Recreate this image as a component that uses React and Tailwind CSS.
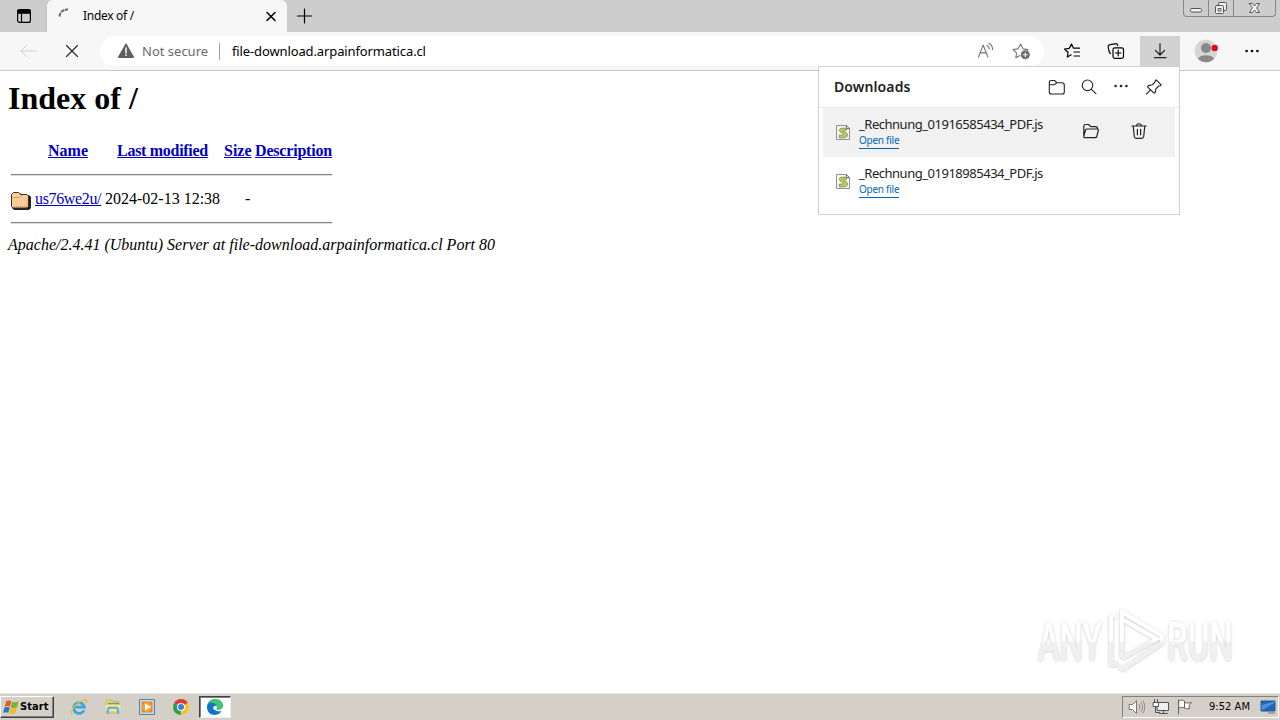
import React from 'react';

const downloads = [
  { name: '_Rechnung_01916585434_PDF.js', active: true },
  { name: '_Rechnung_01918985434_PDF.js', active: false },
];

const Icon = ({ size = 16, className = '', children, w = 1 }) => (
  <svg
    width={size}
    height={size}
    viewBox={`0 0 ${size} ${size}`}
    fill="none"
    stroke="currentColor"
    strokeWidth={w}
    strokeLinecap="round"
    strokeLinejoin="round"
    className={`block shrink-0 ${className}`}
  >
    {children}
  </svg>
);

const Dots = ({ className = '' }) => (
  <Icon className={className}>
    <g fill="currentColor" stroke="none">
      <circle cx="2.6" cy="8" r="1.3" />
      <circle cx="8" cy="8" r="1.3" />
      <circle cx="13.4" cy="8" r="1.3" />
    </g>
  </Icon>
);

const TabBar = () => (
  <div className="flex h-8 bg-[#cdcdcd] text-black">
    <div className="w-[46px] pt-2 pl-4">
      <Icon w={1.2}>
        <rect x="1.6" y="1.6" width="12.8" height="12.8" rx="2" />
        <path d="M2 2h12v3.2H2z" fill="currentColor" />
        <path d="M5.5 5v9" />
      </Icon>
    </div>
    <div className="w-[241px] flex items-center bg-[#f7f7f7] rounded-t-md pl-[11px] pr-2 border-l border-[#c4c4c4]">
      <Icon className="text-[#666]" w={2}>
        <path d="M1.4 8.5C2 4 5 1.4 10 1.4" strokeDasharray="4 .7" strokeLinecap="butt" />
      </Icon>
      <span className="ml-[9px] flex-1 text-[12px] tracking-[-0.3px] whitespace-nowrap">Index of /</span>
      <Icon w={1.5}>
        <path d="M4 4.5l8 8M12 4.5l-8 8" />
      </Icon>
    </div>
    <Icon size={18} className="ml-2 mt-[7px]" w={1.2}>
      <path d="M2.5 9h14M9.5 2v14" />
    </Icon>
    <div className="ml-auto mr-1 flex h-[17px] border border-t-0 border-[#888] rounded-b-sm text-[#555]">
      <div className="w-[25px] pl-[5px] border-r border-[#888]">
        <Icon>
          <rect x="1.5" y="8.5" width="11" height="3.5" rx="1.2" fill="#f3f3f3" />
        </Icon>
      </div>
      <div className="w-[25px] pl-[5px] border-r border-[#888]">
        <Icon>
          <rect x="4.5" y="2.5" width="8" height="8" rx="1" fill="#eee" />
          <rect x="1.5" y="5.5" width="8" height="8" rx="1" fill="#eee" />
          <rect x="4.5" y="8.5" width="2.5" height="2.5" />
        </Icon>
      </div>
      <div className="w-[41px] pl-3">
        <Icon>
          <path d="M3.5 3.5h3L8.5 6l2-2.5h3L10.7 8l2.8 4.5h-3L8.5 10l-2 2.5h-3L6.3 8z" fill="#f3f3f3" />
        </Icon>
      </div>
    </div>
  </div>
);

const Toolbar = () => (
  <div className="flex items-center h-[39px] bg-[#f7f7f7] border-b border-[#c6c6c6]">
    <Icon size={18} className="ml-[19px] text-[#cfcfcf]">
      <path d="M17 9H2M8 3L2 9l6 6" />
    </Icon>
    <Icon className="ml-[27px] text-[#222]" w={1.1}>
      <path d="M2.5 2.5l11 11M13.5 2.5l-11 11" />
    </Icon>
    <div className="ml-[20px] w-[944px] h-[30px] rounded-full bg-white flex items-center pl-[17px] text-[13px] whitespace-nowrap">
      <Icon size={18} className="text-[#5f5f5f]">
        <path d="M9 2.3L16.2 15.2H1.8z" fill="currentColor" strokeWidth="1.6" />
        <path d="M9 6v5M9 13v.6" stroke="#fff" strokeWidth="1.5" />
      </Icon>
      <span className="ml-[7px] pt-px w-[66px] text-[#6a6a6a]">Not secure</span>
      <span className="ml-[11px] w-px h-[17px] bg-[#a0a0a0]" />
      <span className="ml-[12px] pt-px text-black flex-1 tracking-[-0.12px]">file-download.arpainformatica.cl</span>
      <Icon size={18} className="text-[#777] mr-[18px]" w={1.1}>
        <path d="M2.5 15L7.2 3l4.7 12M4.2 10.9h6M11 3.2c1.5.8 2.2 2 2.3 3.7M13 1.2c2.4 1.4 3.6 3.6 3.6 6.4" />
      </Icon>
      <Icon size={18} className="text-[#777] mr-[14px]" w={1.1}>
        <path d="M8 13.6l-4.2 2.2.8-4.8L1 7.6l4.9-.7L8.7 2l2.4 4.9 4.9.7-1 1" />
        <circle cx="13.3" cy="12.8" r="4" fill="#666" />
        <path d="M13.3 10.8v4M11.3 12.8h4" stroke="#fff" />
      </Icon>
    </div>
    <Icon size={18} className="ml-[19px] text-black" w={1.2}>
      <path d="M8.2 12.8L4.3 15l.8-4.7L1.5 7l4.7-.6L8.5 2l2 4.2h6M11 10h5.5M11 14h5.5" />
    </Icon>
    <Icon size={18} className="ml-[26px] text-black" w={1.2}>
      <path d="M3.5 11.5C2.5 11 2.3 10 2 9L1.2 5.2c-.2-1.4.4-2.2 1.8-2.5L8 1.8c1.5-.3 2.3.2 2.7 1.7" />
      <rect x="6" y="5.8" width="10.5" height="10.5" rx="1.8" fill="#f7f7f7" />
      <path d="M11.2 8.2v5.6M8.4 11H14" />
    </Icon>
    <div className="ml-[15px] w-10 h-[31px] bg-[#d2d2d2] flex items-center justify-center text-[#222]">
      <Icon size={18} w={1.2}>
        <path d="M9 1.5v11.3M4.5 8.5L9 13l4.5-4.5M3.5 15.6h11.5" />
      </Icon>
    </div>
    <svg width="24" height="24" viewBox="0 0 24 24" className="ml-[14px]">
      <circle cx="12" cy="12" r="11.3" fill="#d5d5d1" />
      <circle cx="12" cy="9" r="5" fill="#8b8888" />
      <path d="M4 19.5c2-4.5 14-4.5 16 0-3.5 5-12.5 5-16 0z" fill="#8b8888" />
      <circle cx="20.7" cy="9" r="3.2" fill="#d90d1c" />
    </svg>
    <Dots className="ml-[26px] text-black" />
  </div>
);

const DirectoryIndex = () => (
  <main className="h-[622px] pl-2 font-['Liberation_Serif',serif] text-[16px] leading-[18px] text-black">
    <h1 className="pt-[9px] text-[32px] leading-9 font-bold">Index of /</h1>
    <div className="ml-[3px] w-[321px]">
      <div className="mt-[26px] grid grid-cols-[20px_66px_115px_27px_77px] gap-x-1 text-center font-bold text-[#0000c8] underline whitespace-nowrap">
        <span />
        <span>Name</span>
        <span className="tracking-[-0.3px]">Last modified</span>
        <span>Size</span>
        <span className="tracking-[-0.2px]">Description</span>
      </div>
      <hr className="mt-[14px] h-[2px] border-t border-b border-t-[#808080] border-b-[#ddd]" />
      <div className="mt-[14px] h-[22px] grid grid-cols-[20px_66px_115px_27px_77px] gap-x-1 whitespace-nowrap">
        <svg width="20" height="22" viewBox="0 0 20 22">
          <path d="M2 5l2-2h5l2 2h7l2 2v11l-2 2H3l-2-2z" fill="#222" />
          <path d="M.5 4.5l2-2h5l2 2h6.5l1.5 1.5v10.5L16 18H2L.5 16.5z" fill="#ffcc99" stroke="#333" />
          <path d="M1.5 7.5h7l2-2" fill="none" stroke="#c98f5c" strokeWidth=".8" />
          <path d="M3 16.5h13V8" fill="none" stroke="#d88b58" strokeDasharray="1 1" />
        </svg>
        <span className="text-[#0000c8] underline tracking-[-0.35px]">us76we2u/</span>
        <span>2024-02-13 12:38</span>
        <span className="pl-[21px]">-</span>
      </div>
      <hr className="mt-[10px] h-[2px] border-t border-b border-t-[#808080] border-b-[#ddd]" />
    </div>
    <address className="mt-3 italic">
      Apache/2.4.41 (Ubuntu) Server at file-download.arpainformatica.cl Port 80
    </address>
  </main>
);

const ScriptIcon = () => (
  <svg width="16" height="17" viewBox="0 0 16 17" className="shrink-0">
    <path d="M1.5 1.5h10l3 3v11h-13z" fill="#f8f8f5" stroke="#8f8f9b" />
    <path d="M11.5 1.5v3h3" fill="none" stroke="#66667a" />
    <path d="M11.5 4.2H6.8C4 4.2 3.5 7 5.7 8.2l1.8 1c1 .8.6 2-1 2H4.2v2.6h5.3c3.2 0 4-3.6 1.7-5L8.8 7.3c-.8-.6-.5-1 .7-1h2z" fill="#bdc763" stroke="#7f883f" strokeWidth=".8" />
  </svg>
);

const DownloadsPanel = () => (
  <div className="absolute left-[818px] top-[66px] w-[362px] h-[149px] bg-white border border-[#d0d0d0] text-[#222]">
    <div className="flex items-center h-[41px] pl-[15px] border-b border-[#ececec]">
      <span className="flex-1 pb-[2px] text-[14px] font-semibold tracking-[0.1px]">Downloads</span>
      <Icon size={18} className="mr-[14px]" w={1.1}>
        <path d="M1.3 4.5c0-1.3.7-2 2-2h3.2L8.8 4.7h5c1.7 0 2.5.8 2.5 2.3v7c0 1.2-.8 2-2 2h-11c-1.3 0-2-.8-2-2zM1.3 6.8h5l2.5-2.1" />
      </Icon>
      <Icon size={18} className="mr-[15px]" w={1.1}>
        <circle cx="7.5" cy="7.3" r="5.3" />
        <path d="M11.5 11.3l4.4 4.4" />
      </Icon>
      <Dots className="mr-4 mt-[-2px]" />
      <Icon size={18} className="mr-4 mt-[-1px]" w={1.1}>
        <path d="M11.2 1.8l5 5-1 1-1.5.2-2.8 2.9-.7 3.5-1.2.8-6.5-6.4.9-1.2 3.8-.8 2.9-2.8.1-1.2zM5.6 11.9l-4.3 4.3" />
      </Icon>
    </div>
    {downloads.map((d) => (
      <div
        key={d.name}
        className={`mx-1 h-[49px] flex items-center pl-3 ${d.active ? 'bg-[#f1f1f1]' : ''}`}
      >
        <ScriptIcon />
        <div className="ml-2 w-[215px]">
          <div className="mt-[-1px] mb-px text-[13px] leading-[17px] tracking-[-0.48px] whitespace-nowrap">{d.name}</div>
          <a className="block w-10 h-[15px] text-[10px] leading-[13px] tracking-[-0.26px] text-[#0067b8] border-b border-[#0067b8] whitespace-nowrap">
            Open file
          </a>
        </div>
        {d.active && (
          <>
            <Icon size={18} className="ml-2 mt-[-3px]" w={1.2}>
              <path d="M1.8 14V4.5c0-1.2.7-2 2-2h2.7L8.8 4.6h4.7c1.3 0 2 .7 2 2V7M1.8 14.3L3.5 8c.3-.7.8-1 1.6-1h10.1c1 0 1.4.6 1.1 1.5l-1.5 6c-.3.9-.8 1.2-1.7 1.2H3.1c-1 0-1.6-.6-1.3-1.4z" />
            </Icon>
            <Icon size={18} className="ml-[30px] mt-[-3px]" w={1.2}>
              <path d="M1.8 4h14.4M6.6 4c0-3 4.8-3 4.8 0M3.2 4l1.1 10.5c.2 1.3.8 1.8 2 1.8h5.4c1.2 0 1.8-.5 2-1.8L14.8 4M7.4 7.3v5.5M10.6 7.3v5.5" />
            </Icon>
          </>
        )}
      </div>
    ))}
  </div>
);

const Watermark = () => (
  <svg width="215" height="80" viewBox="0 0 215 80" className="absolute left-[1030px] top-[600px]">
    <defs>
      <filter id="glow" x="-10%" y="-20%" width="120%" height="140%">
        <feDropShadow dx="0" dy="0.5" stdDeviation="1.6" floodColor="#777" floodOpacity="0.42" />
      </filter>
      <linearGradient id="fade" x1="0" y1="20" x2="0" y2="64" gradientUnits="userSpaceOnUse">
        <stop offset=".48" stopColor="#fff" />
        <stop offset=".5" stopColor="#f0f0f0" />
      </linearGradient>
    </defs>
    {/* userSpaceOnUse follows each text's own transform, so the letters get their own stop line */}
    <linearGradient id="fadeText" x1="0" y1="-40" x2="0" y2="4" gradientUnits="userSpaceOnUse">
      <stop offset=".48" stopColor="#fff" />
      <stop offset=".5" stopColor="#f0f0f0" />
    </linearGradient>
    <g filter="url(#glow)" fill="url(#fadeText)" fontFamily="Roboto, sans-serif" fontSize="53" fontWeight="500">
      <text transform="translate(8 60) scale(.615 1)">ANY</text>
      <text transform="translate(137 60) scale(.622 1)">RUN</text>
      <g fill="none" stroke="url(#fade)" strokeWidth="4">
        <path d="M81 65V17l5-2M81 65l7-2" />
        <path d="M92 58V12l40 24v7L93 69l-4-2M92 58l35-19L92 19" />
      </g>
    </g>
  </svg>
);

const TaskIcons = () => (
  <div className="flex items-center">
    <svg width="18" height="18" viewBox="0 0 18 18" className="ml-4">
      <path d="M14 12.2A5.4 5.4 0 1 1 14.4 9.1H5" fill="none" stroke="#35a9df" strokeWidth="2.8" />
      <path d="M2 16C0 11 9 2 16.5 2c.8 1 .2 2-.5 3" fill="none" stroke="#e9b93c" strokeWidth="1.3" />
    </svg>
    <svg width="18" height="18" viewBox="0 0 18 18" className="ml-4">
      <path d="M2 4l1-2h5l1 1.5h6V15H2z" fill="#f0d56c" stroke="#c99e3e" strokeWidth=".6" />
      <path d="M4 5.5h11" stroke="#5aa879" strokeWidth="1.4" />
      <path d="M1.5 7h15v6h-15z" fill="#f8e7a0" />
      <path d="M4 16v-4.5c0-1.2.7-1.8 2-1.8h6c1.3 0 2 .6 2 1.8V16" fill="none" stroke="#69b7dc" strokeWidth="2.4" />
    </svg>
    <svg width="18" height="18" viewBox="0 0 18 18" className="ml-4">
      <path d="M1.5 1.5h15v15h-15z" fill="#c3dcf0" stroke="#4286bd" />
      <path d="M3.5 3.5h11v11h-11z" fill="#f3851d" />
      <circle cx="9" cy="9" r="4.6" fill="#f9a33d" />
      <path d="M7 5.6v6.8L13 9z" fill="#fff" />
    </svg>
    <svg width="18" height="18" viewBox="0 0 18 18" className="ml-4">
      <path d="M9 9L2.1 5a8 8 0 0 1 13.8 0z" fill="#e13b2d" />
      <path d="M9 9l-.2 8A8 8 0 0 1 2.1 5z" fill="#29a04b" />
      <path d="M9 9l6.9-4A8 8 0 0 1 8.8 17L12 10z" fill="#fbc51d" />
      <circle cx="9" cy="9" r="4" fill="#fff" />
      <circle cx="9" cy="9" r="3" fill="#3c7ee8" />
    </svg>
    <div className="ml-[9px] w-8 h-[22px] bg-white border border-t-[#404040] border-l-[#404040] border-b-[#eee] border-r-[#eee] shadow-[inset_1px_1px_#808080] flex items-center justify-center">
      <svg width="18" height="18" viewBox="0 0 18 18">
        <path d="M1 9c0-5 3.5-8 8-8 5 0 8 3.2 8 6.7 0 3-3.5 5-6.6 3.7 1.7-3-1.4-5.6-4.4-5.2C3.7 6.5 1.5 8 1 9z" fill="#2aaf99" />
        <path d="M3 5C5-.5 14.5-.2 17 6.3c.4 3.8-2.6 5.8-6.2 5C13 6.7 7 3.5 3 5z" fill="#45c476" />
        <path d="M1 9c.4-5.6 8.2-5.3 9.2-1.3C5 8 6.5 14 15.5 13.3 12 19 1 18.4 1 9z" fill="#1375c8" />
      </svg>
    </div>
  </div>
);

const Taskbar = () => (
  <footer className="h-[27px] bg-[#d4d0c8] border-t border-[#e8e6e1] flex items-center text-black font-['DejaVu_Sans_Condensed','DejaVu_Sans',sans-serif] [font-stretch:condensed] text-[11px]">
    <div className="w-[54px] h-[22px] flex items-center pl-[2px] border border-t-white border-l-white border-b-[#404040] border-r-[#404040] shadow-[inset_-1px_-1px_#808080] font-bold">
      <svg width="17" height="17" viewBox="0 0 16 16">
        <path d="M3 2c1.8-1 3.4-.8 4.8.1L6.7 7.2C5 6.4 3.5 6.4 1.7 7.2z" fill="#e95a24" />
        <path d="M8.5 2.5c1.8.8 3.7.7 6-.2L13.3 7.8c-2 1-4 1-5.9.1z" fill="#78b530" />
        <path d="M1.4 8c1.8-.8 3.4-.8 4.8.1L5 13c-1.5-.8-3-.8-4.8 0z" fill="#2576c9" />
        <path d="M7.1 8.5c1.8.8 3.7.8 5.9-.2l-1.4 5c-2 1-3.9 1-5.7.1z" fill="#f5ba22" />
      </svg>
      <span className="pt-px tracking-[0.1px]">Start</span>
    </div>
    <TaskIcons />
    <div className="ml-auto mr-px w-[157px] h-[22px] flex items-center border border-t-[#808080] border-l-[#808080] border-b-white border-r-white whitespace-nowrap">
      <Icon size={18} className="ml-[5px] text-[#777]">
        <path d="M1.5 6.5h3l4-4v13l-4-4h-3z" fill="#fff" />
        <path d="M11 6.5c1 1.5 1 3.5 0 5M13 4.5c2 2.5 2 6.5 0 9M15 3c2.4 3.5 2.4 8.5 0 12" strokeWidth=".8" />
      </Icon>
      <Icon size={18} className="ml-[6px] text-[#555]">
        <path d="M5.5 4.5h11v8h-11z" fill="#eee" />
        <path d="M7.5 15.5h8M11.5 12.5v3M3.5 8.5v6h4" />
        <path d="M2.5 1.5v3M5.5 1.5v3M1.5 4.5h5v4h-5z" fill="#fff" />
      </Icon>
      <Icon size={18} className="ml-[6px] text-[#666]">
        <path d="M2.5 2v14M3 3c2-1.5 4-1 5.5 0v7C7 9 5 9 3 10zM8.5 4.5c2.5.8 4 .5 7 0L13 7.5l.5 3c-2 .5-3.5.5-5-.5" fill="#fff" />
      </Icon>
      <span className="ml-[15px] pt-px w-[42px] tracking-[0.05px]">9:52 AM</span>
      <svg width="16" height="16" viewBox="0 0 16 16" className="ml-[9px]">
        <path d="M1 2h14v10H1z" fill="#2464bd" stroke="#2a5595" />
        <path d="M1.5 11.5V6L15 2.5v1z" fill="#4c92dc" />
        <path d="M8 14h7" stroke="#8a96a3" strokeWidth="1.5" />
      </svg>
    </div>
  </footer>
);

const App = () => (
  <div className="relative w-[1280px] h-[720px] overflow-hidden bg-white font-['Noto_Sans',sans-serif]">
    <TabBar />
    <Toolbar />
    <DirectoryIndex />
    <Taskbar />
    <DownloadsPanel />
    <Watermark />
  </div>
);

export default App;
